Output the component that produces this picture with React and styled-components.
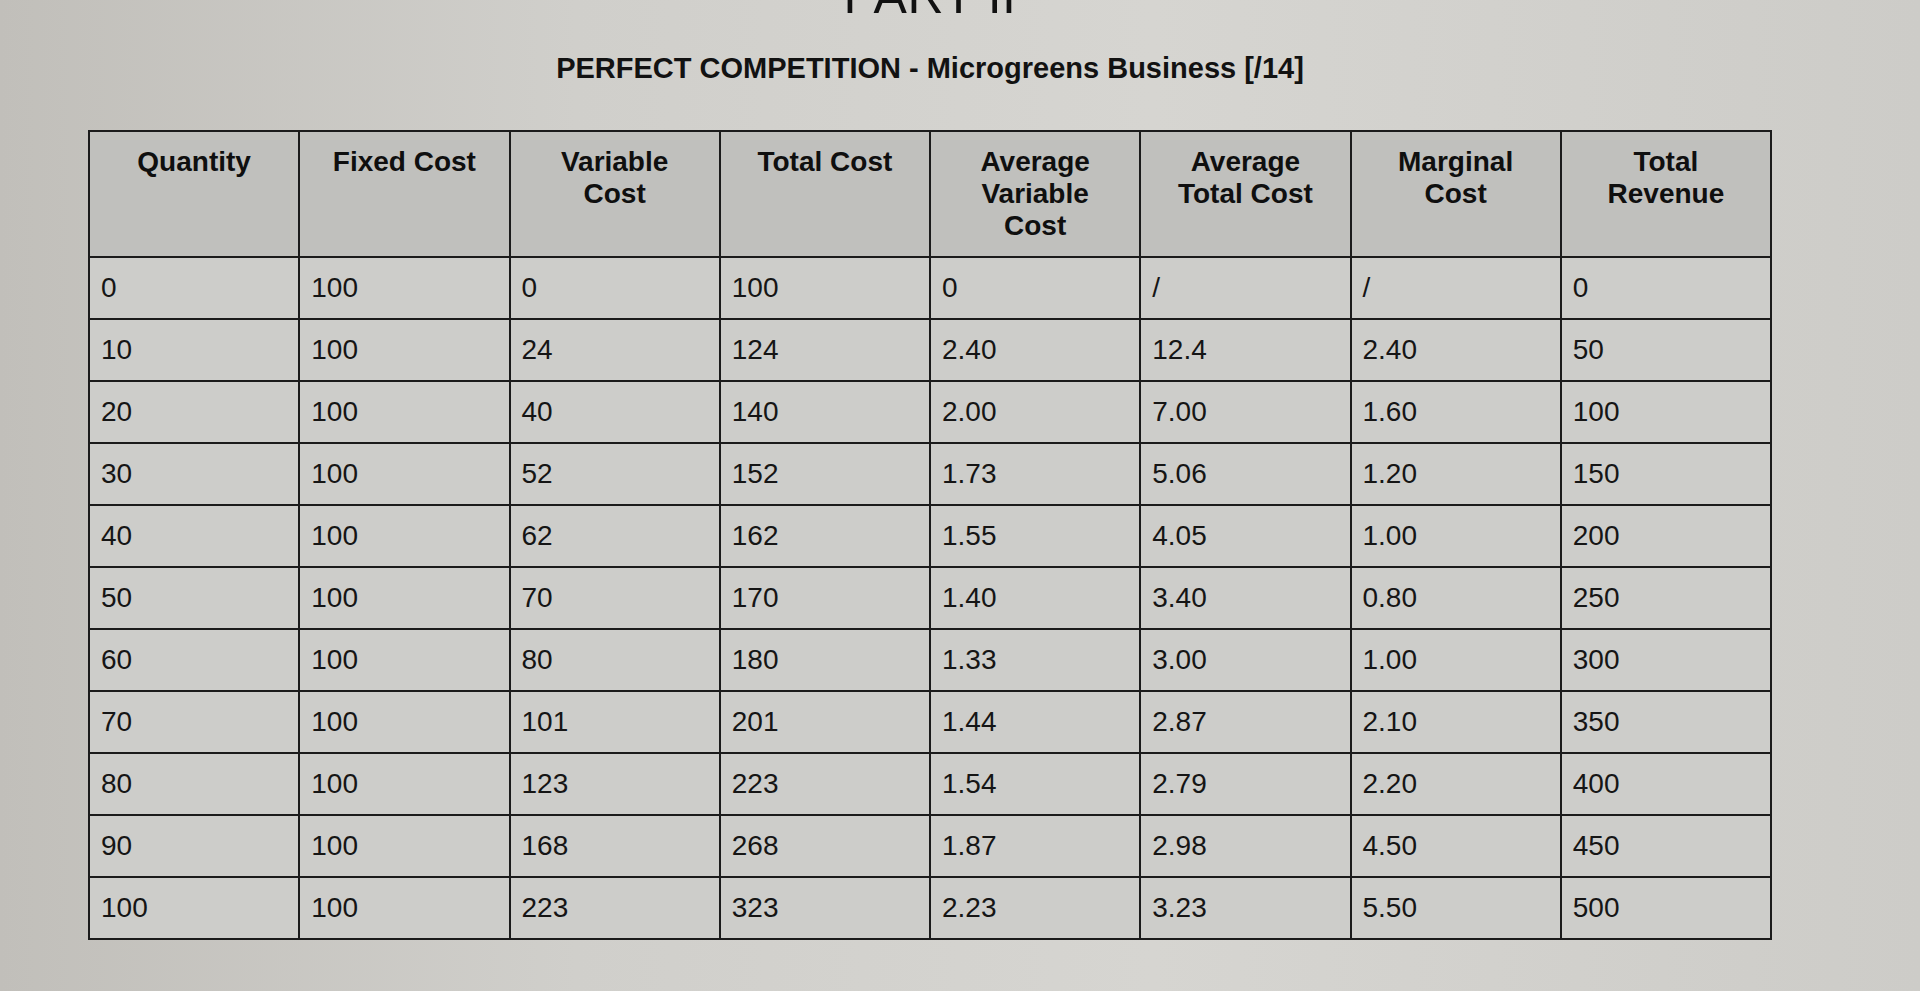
import styled, { createGlobalStyle } from "styled-components";

const GlobalStyle = createGlobalStyle`
html, body {
  margin: 0;
  padding: 0;
  height: 100%;
}
body {
  font-family: "Liberation Sans", Arial, sans-serif;
  color: #141414;
  background: linear-gradient(90deg, #c1bfba 0%, #d0cfcb 30%, #d6d5d1 60%, #cdccc8 100%);
  overflow: hidden;
}
`

const Page = styled.div`
display: flex;
flex-direction: column;
align-items: center;
width: 1684px;
margin-left: 88px;
height: 991px;
`

const PartLabel = styled.div`
margin-top: -29px;
font-size: 50px;
line-height: 50px;
font-weight: 400;
color: #111;
letter-spacing: 0.5px;
`

const Title = styled.h1`
margin: 30px 0 0 0;
font-size: 29px;
line-height: 34px;
font-weight: 700;
color: #121212;
`

const Table = styled.table`
margin-top: 45px;
width: 1684px;
border-collapse: collapse;
table-layout: fixed;
border: 2px solid #1b1b1b;
`

const HeadCell = styled.th`
height: 126px;
box-sizing: border-box;
padding: 14px 6px 0 6px;
vertical-align: top;
text-align: center;
font-size: 28px;
line-height: 32px;
font-weight: 700;
color: #0f0f0f;
background: #c0c0bd;
border: 2px solid #1b1b1b;
`

const Cell = styled.td`
height: 62px;
box-sizing: border-box;
padding: 0 10px 0 11px;
vertical-align: middle;
text-align: left;
font-size: 28px;
font-weight: 400;
color: #151515;
background: #cdcdca;
border: 2px solid #1b1b1b;
`

const headers = [
  ["Quantity"],
  ["Fixed Cost"],
  ["Variable", "Cost"],
  ["Total Cost"],
  ["Average", "Variable", "Cost"],
  ["Average", "Total Cost"],
  ["Marginal", "Cost"],
  ["Total", "Revenue"],
];

const rows = [
  ["0", "100", "0", "100", "0", "/", "/", "0"],
  ["10", "100", "24", "124", "2.40", "12.4", "2.40", "50"],
  ["20", "100", "40", "140", "2.00", "7.00", "1.60", "100"],
  ["30", "100", "52", "152", "1.73", "5.06", "1.20", "150"],
  ["40", "100", "62", "162", "1.55", "4.05", "1.00", "200"],
  ["50", "100", "70", "170", "1.40", "3.40", "0.80", "250"],
  ["60", "100", "80", "180", "1.33", "3.00", "1.00", "300"],
  ["70", "100", "101", "201", "1.44", "2.87", "2.10", "350"],
  ["80", "100", "123", "223", "1.54", "2.79", "2.20", "400"],
  ["90", "100", "168", "268", "1.87", "2.98", "4.50", "450"],
  ["100", "100", "223", "323", "2.23", "3.23", "5.50", "500"],
];

function App() {
  return (
    <>
      <GlobalStyle />
      <Page>
        <PartLabel>PART II</PartLabel>
        <Title>PERFECT COMPETITION - Microgreens Business [/14]</Title>
        <Table>
          <thead>
            <tr>
              {headers.map((lines, i) => (
                <HeadCell key={i}>
                  {lines.map((line, j) => (
                    <div key={j}>{line}</div>
                  ))}
                </HeadCell>
              ))}
            </tr>
          </thead>
          <tbody>
            {rows.map((row, i) => (
              <tr key={i}>
                {row.map((value, j) => (
                  <Cell key={j}>{value}</Cell>
                ))}
              </tr>
            ))}
          </tbody>
        </Table>
      </Page>
    </>
  );
}

export default App;
